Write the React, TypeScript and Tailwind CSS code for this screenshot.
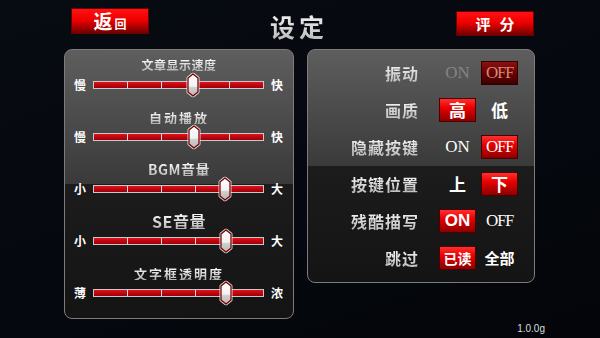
import React from 'react';

const sliders = [
  { label: '文章显示速度', labelCls: 'text-[12px] tracking-[0.5px]', left: '慢', right: '快', thumb: 'left-[99px]' },
  { label: '自动播放', labelCls: 'text-[13px] tracking-[2px]', left: '慢', right: '快', thumb: 'left-[100px]' },
  { label: 'BGM音量', labelCls: 'text-[14px] tracking-[0.5px]', left: '小', right: '大', thumb: 'left-[131px]' },
  { label: 'SE音量', labelCls: 'text-[16px] tracking-[0.5px]', left: '小', right: '大', thumb: 'left-[132px]' },
  { label: '文字框透明度', labelCls: 'text-[13px] tracking-[2px]', left: '薄', right: '浓', thumb: 'left-[132px]' },
];

const shade = 'bg-linear-to-b from-white to-[#b4b4b4] bg-clip-text text-transparent';

function Thumb({ pos }: { pos: string }) {
  return (
    <div className={`absolute top-1/2 -translate-x-1/2 -translate-y-1/2 ${pos}`}>
      <svg width="15" height="25" viewBox="0 0 15 25">
        <defs>
          <linearGradient id="thumbFill" x1="0" y1="0" x2="0" y2="1">
            <stop offset="0" stopColor="#ffffff" />
            <stop offset="0.55" stopColor="#f2f2f2" />
            <stop offset="0.62" stopColor="#cfcfcf" />
            <stop offset="1" stopColor="#b8b8b8" />
          </linearGradient>
        </defs>
        <path d="M7.5 1.5 L12.5 5.5 L12.5 19.5 L7.5 23.5 L2.5 19.5 L2.5 5.5 Z" fill="none" stroke="#ffffff" strokeWidth="3" strokeLinejoin="round" opacity="0.8" />
        <path d="M7.5 1.5 L12.5 5.5 L12.5 19.5 L7.5 23.5 L2.5 19.5 L2.5 5.5 Z" fill="url(#thumbFill)" stroke="#7a0000" strokeWidth="1.3" strokeLinejoin="round" />
      </svg>
    </div>
  );
}

function Track({ pos }: { pos: string }) {
  return (
    <div className="relative flex h-[8px] w-full border border-[#c8c8c8] bg-[#b00008]">
      {[0, 1, 2, 3, 4].map((i) => (
        <div
          key={i}
          className={`h-full flex-1 bg-linear-to-b from-[#e3101a] to-[#9a0008] ${i < 4 ? 'border-r border-[#dcdcdc]' : ''}`}
        />
      ))}
      <Thumb pos={pos} />
    </div>
  );
}

function RedBtn({ children, dim }: { children: React.ReactNode; dim?: boolean }) {
  return (
    <div
      className={
        dim
          ? 'flex h-[24px] w-[37px] items-center justify-center border border-[#2a0000] bg-[linear-gradient(to_bottom,#8c1010_0%,#6c0000_50%,#3c0000_100%)] text-[#c8907c]'
          : 'flex h-[24px] w-[37px] items-center justify-center border border-[#4a0000] bg-[linear-gradient(to_bottom,#ff3030_0%,#e80000_40%,#8a0000_100%)] text-white'
      }
    >
      {children}
    </div>
  );
}

// the OFF label has a large O and slightly smaller F's
function Off({ className }: { className?: string }) {
  return (
    <span className={`flex items-baseline font-['Liberation_Serif',serif] leading-none tracking-[-1px] ${className ?? ''}`}>
      <span className="text-[17px]">O</span>
      <span className="text-[16px]">FF</span>
    </span>
  );
}

function SerifOn({ className }: { className?: string }) {
  return <span className={`font-['Liberation_Serif',serif] text-[17px] leading-none ${className ?? ''}`}>ON</span>;
}

function Slot({ children }: { children: React.ReactNode }) {
  return <div className="flex h-[24px] w-[37px] items-center justify-center">{children}</div>;
}

const optText = 'text-[17px] font-bold leading-none text-white';

const rows: { label: string; a: React.ReactNode; b: React.ReactNode }[] = [
  {
    label: '振动',
    a: <Slot><SerifOn className="text-[#858585]" /></Slot>,
    b: <RedBtn dim><Off /></RedBtn>,
  },
  {
    label: '画质',
    a: <RedBtn><span className={optText}>高</span></RedBtn>,
    b: <Slot><span className={optText}>低</span></Slot>,
  },
  {
    label: '隐藏按键',
    a: <Slot><SerifOn className="text-white" /></Slot>,
    b: <RedBtn><Off /></RedBtn>,
  },
  {
    label: '按键位置',
    a: <Slot><span className={optText}>上</span></Slot>,
    b: <RedBtn><span className={optText}>下</span></RedBtn>,
  },
  {
    label: '残酷描写',
    a: <RedBtn><span className="font-['Liberation_Sans',sans-serif] text-[17px] font-bold leading-none">ON</span></RedBtn>,
    b: <Slot><Off className="text-white" /></Slot>,
  },
  {
    label: '跳过',
    a: <RedBtn><span className="text-[14px] font-bold leading-none">已读</span></RedBtn>,
    b: <Slot><span className="text-[15px] font-bold leading-none text-white">全部</span></Slot>,
  },
];

export default function App() {
  return (
    <div className="flex h-[338px] w-[600px] flex-col overflow-hidden bg-[linear-gradient(160deg,#070b12_0%,#05080e_60%,#03050a_100%)] font-['Noto_Sans_CJK_SC',sans-serif]">
      {/* header */}
      <div className="flex h-[49px] items-start">
        <div className="ml-[71px] mt-[8px] flex h-[26px] w-[78px] items-end justify-center border border-[#6a0000] bg-[linear-gradient(to_bottom,#ff1212_0%,#f00000_45%,#a00000_80%,#700000_100%)] pb-[3px] font-bold text-white">
          <span className="text-[19px] leading-none">返</span>
          <span className="ml-[2px] text-[12px] leading-none">回</span>
        </div>
        <div className="mt-[10px] flex-1 pr-[7px] text-center">
          <span className={`text-[25px] font-bold leading-[32px] tracking-[4px] ${shade}`}>设定</span>
        </div>
        <div className="mr-[66px] mt-[11px] flex h-[25px] w-[78px] items-center justify-center border border-[#6a0000] bg-[linear-gradient(to_bottom,#ff1212_0%,#f00000_45%,#a00000_80%,#700000_100%)] text-[15px] font-bold leading-none tracking-[9px] text-white">
          <span className="ml-[9px]">评分</span>
        </div>
      </div>

      {/* panels */}
      <div className="flex h-[270px] items-start pl-[64px]">
        <div className="h-[270px] w-[230px] rounded-[8px] border border-[#7c7c7c] bg-[linear-gradient(to_bottom,#5e5e5e_0%,#3a3a3a_50%,#1c1c1c_50%,#141414_100%)] pt-[7px]">
          {sliders.map((s, i) => (
            <div key={i} className="mb-[12px] flex flex-col">
              <div className="flex h-[16px] items-center justify-center">
                <span className={`font-bold leading-none ${s.labelCls} ${shade}`}>{s.label}</span>
              </div>
              <div className="grid h-[24px] grid-cols-[24px_171px_24px] items-center gap-x-[1px] pl-[3px]">
                <span className="text-center text-[12px] font-bold leading-none text-white">{s.left}</span>
                <Track pos={s.thumb} />
                <span className="text-center text-[12px] font-bold leading-none text-white">{s.right}</span>
              </div>
            </div>
          ))}
        </div>

        <div className="ml-[13px] h-[234px] w-[228px] rounded-[8px] border border-[#7c7c7c] bg-[linear-gradient(to_bottom,#5e5e5e_0%,#3a3a3a_50%,#1c1c1c_50%,#141414_100%)] pt-[4px]">
          {rows.map((r, i) => (
            <div key={i} className="flex h-[37px] items-center">
              <div className="w-[111px] text-right">
                <span className={`text-[16px] font-bold leading-none tracking-[1px] ${shade}`}>{r.label}</span>
              </div>
              <div className="ml-[20px]">{r.a}</div>
              <div className="ml-[5px]">{r.b}</div>
            </div>
          ))}
        </div>
      </div>

      {/* version */}
      <div className="flex h-[19px] items-center justify-end pr-[55px] font-['Liberation_Sans',sans-serif] text-[10px] text-[#dcdcdc]">
        1.0.0g
      </div>
    </div>
  );
}
